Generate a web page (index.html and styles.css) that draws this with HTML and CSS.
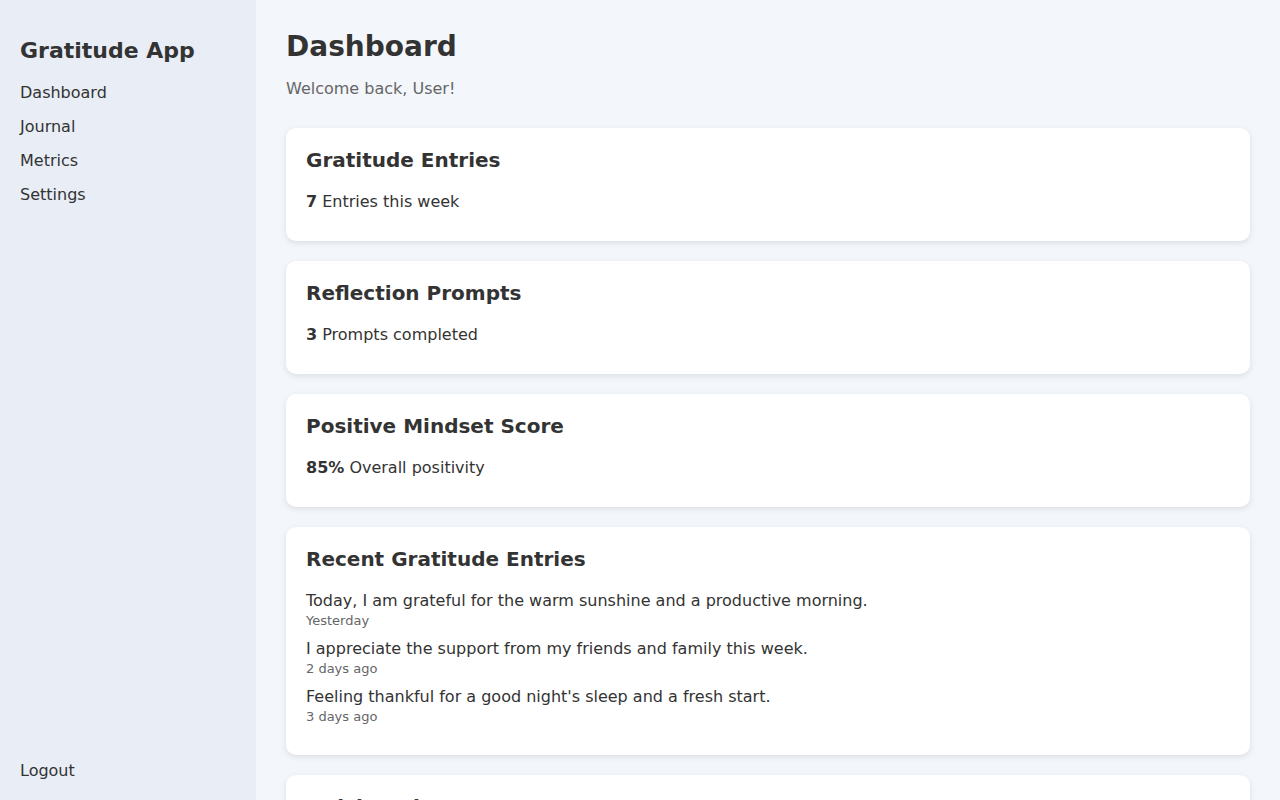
FILE: index.html
```html
<!DOCTYPE html>
<html lang="en">
<head>
<meta charset="utf-8">
<title>Gratitude App - Dashboard</title>
<link rel="stylesheet" href="styles.css">
</head>
<body>
<div class="app">
  <aside class="sidebar">
    <h2 class="brand">Gratitude App</h2>
    <ul class="nav">
      <li><a href="#">Dashboard</a></li>
      <li><a href="#">Journal</a></li>
      <li><a href="#">Metrics</a></li>
      <li><a href="#">Settings</a></li>
    </ul>
    <a href="#" class="logout">Logout</a>
  </aside>
  <main class="main">
    <h1 class="page-title">Dashboard</h1>
    <p class="welcome">Welcome back, User!</p>

    <section class="card">
      <h3 class="card-title">Gratitude Entries</h3>
      <p class="stat"><strong>7</strong> Entries this week</p>
    </section>

    <section class="card">
      <h3 class="card-title">Reflection Prompts</h3>
      <p class="stat"><strong>3</strong> Prompts completed</p>
    </section>

    <section class="card">
      <h3 class="card-title">Positive Mindset Score</h3>
      <p class="stat"><strong>85%</strong> Overall positivity</p>
    </section>

    <section class="card">
      <h3 class="card-title">Recent Gratitude Entries</h3>
      <ul class="entries">
        <li class="entry">
          <p class="entry-text">Today, I am grateful for the warm sunshine and a productive morning.</p>
          <span class="entry-date">Yesterday</span>
        </li>
        <li class="entry">
          <p class="entry-text">I appreciate the support from my friends and family this week.</p>
          <span class="entry-date">2 days ago</span>
        </li>
        <li class="entry">
          <p class="entry-text">Feeling thankful for a good night's sleep and a fresh start.</p>
          <span class="entry-date">3 days ago</span>
        </li>
      </ul>
    </section>

    <section class="card">
      <h3 class="card-title">Quick Actions</h3>
      <p class="stat">Write a new entry or answer today's prompt.</p>
    </section>
  </main>
</div>
</body>
</html>
```

FILE: styles.css
```css
* {
  box-sizing: border-box;
}

html, body {
  margin: 0;
  padding: 0;
  height: 100%;
}

body {
  font-family: "DejaVu Sans", "Liberation Sans", sans-serif;
  color: #333333;
  background: #f3f6fb;
  overflow: hidden;
}

.app {
  display: flex;
  height: 100vh;
}

.sidebar {
  width: 256px;
  flex-shrink: 0;
  background: #e8edf6;
  padding: 20px;
  display: flex;
  flex-direction: column;
}

.brand {
  font-size: 22px;
  line-height: 26px;
  font-weight: bold;
  margin: 18px 0 19px;
  color: #333333;
}

.nav {
  list-style: none;
  margin: 0;
  padding: 0;
  display: flex;
  flex-direction: column;
  gap: 15px;
}

.nav a,
.logout {
  font-size: 16px;
  line-height: 19px;
  color: #333333;
  text-decoration: none;
  display: block;
}

.logout {
  margin-top: auto;
}

.main {
  flex: 1;
  padding: 30px;
  overflow: hidden;
}

.page-title {
  font-size: 28px;
  line-height: 33px;
  font-weight: bold;
  margin: 0 0 16px;
}

.welcome {
  font-size: 16px;
  line-height: 19px;
  color: #666666;
  margin: 0 0 30px;
}

.card {
  background: #ffffff;
  border-radius: 10px;
  box-shadow: 0 2px 6px rgba(0, 0, 0, 0.1);
  padding: 20px;
  margin-bottom: 20px;
}

.card-title {
  font-size: 20px;
  line-height: 23px;
  font-weight: bold;
  margin: 1px 0 20px;
}

.stat {
  font-size: 16px;
  line-height: 19px;
  margin: 0 0 10px;
}

.entries {
  list-style: none;
  margin: 0;
  padding: 0;
}

.entry {
  margin-bottom: 11px;
}

.entry-text {
  font-size: 16px;
  line-height: 19px;
  margin: 0;
}

.entry-date {
  display: block;
  font-size: 13px;
  line-height: 15px;
  margin-top: 3px;
  color: #666666;
}
```
